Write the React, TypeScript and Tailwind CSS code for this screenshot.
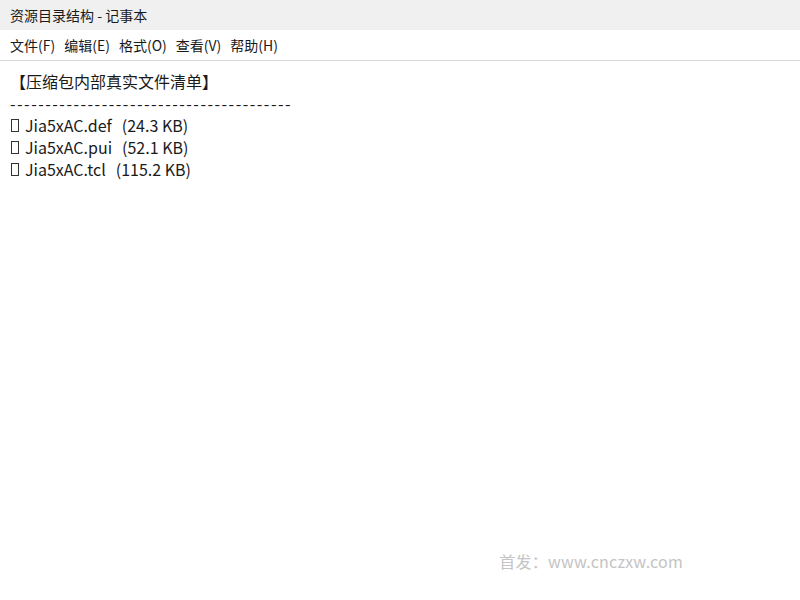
import React from 'react';

const font = { fontFamily: '"Noto Sans CJK SC", "Noto Sans", sans-serif' };

const files = [
  { name: 'Jia5xAC.def', size: '(24.3 KB)' },
  { name: 'Jia5xAC.pui', size: '(52.1 KB)' },
  { name: 'Jia5xAC.tcl', size: '(115.2 KB)' },
];

const menus = ['文件(F)', '编辑(E)', '格式(O)', '查看(V)', '帮助(H)'];

export default function App() {
  return (
    <div className="w-[800px] h-[600px] bg-white flex flex-col text-[#1a1a1a]" style={font}>
      <div className="h-[30px] bg-[#f0f0f0] flex items-center px-[10px] text-[14px]">资源目录结构 - 记事本</div>
      <div className="h-[31px] flex items-center gap-[9px] px-[10px] text-[14px] border-b border-[#d9d9d9]">
        {menus.map((m) => (
          <span key={m}>{m}</span>
        ))}
      </div>
      <div className="flex-1 flex flex-col px-[10px] pt-[9px] text-[16px] leading-[22px]">
        <div>【压缩包内部真实文件清单】</div>
        <div className="tracking-[1.5px]">{'-'.repeat(40)}</div>
        {files.map((f) => (
          <div key={f.name} className="flex items-center">
            <span className="inline-block w-[8px] h-[13px] border border-[#333] ml-[1px] mr-[6px]" />
            <span>{f.name}</span>
            <span className="ml-[10px]">{f.size}</span>
          </div>
        ))}
        <div className="flex-1" />
        <div className="flex justify-end pr-[107px] pb-[28px] text-[16px] tracking-[0.2px] text-[#c4c4c4]">首发：www.cnczxw.com</div>
      </div>
    </div>
  );
}
